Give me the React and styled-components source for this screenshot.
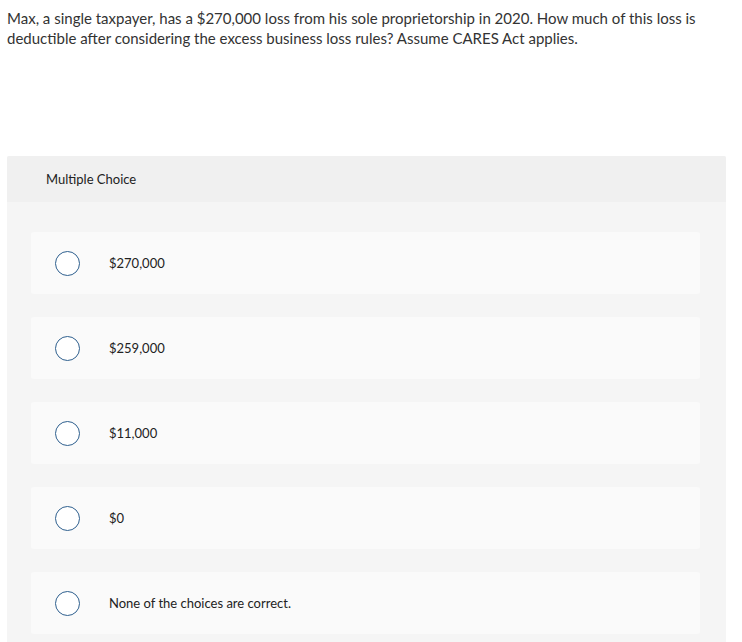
import React from 'react'
import styled, { createGlobalStyle } from 'styled-components'

const GlobalStyle = createGlobalStyle`
  body {
    margin: 0;
    background: #ffffff;
    font-family: Lato, "Open Sans", sans-serif;
    color: #333333;
  }
`

const choices = ['$270,000', '$259,000', '$11,000', '$0', 'None of the choices are correct.']

function App() {
    return (
        <Page>
            <GlobalStyle />
            <Question>
                Max, a single taxpayer, has a $270,000 loss from his sole proprietorship in 2020. How much of this loss is deductible after considering the excess business loss rules? Assume CARES Act applies.
            </Question>
            <Panel>
                <PanelHeader>Multiple Choice</PanelHeader>
                <Choices>
                    {choices.map((c) => (
                        <Choice key={c}>
                            <Radio />
                            <ChoiceText>{c}</ChoiceText>
                        </Choice>
                    ))}
                </Choices>
            </Panel>
        </Page>
    )
}

export default App

const Page = styled.div`
  padding: 8px 16px 0 7px;
`

const Question = styled.div`
  font-size: 15px;
  line-height: 20px;
  color: #333;
  min-height: 148px;
`

const Panel = styled.div`
  background: #f5f5f5;
  border-radius: 2px;
  overflow: hidden;
`

const PanelHeader = styled.div`
  background: #f0f0f0;
  height: 46px;
  display: flex;
  align-items: center;
  padding-left: 39px;
  font-size: 13px;
  color: #222;
`

const Choices = styled.div`
  display: flex;
  flex-direction: column;
  gap: 23px;
  padding: 30px 26px 10px 24px;
`

const Choice = styled.div`
  background: #fafafa;
  border-radius: 3px;
  height: 62px;
  display: flex;
  align-items: center;
  padding-left: 24px;
`

const Radio = styled.span`
  width: 23px;
  height: 23px;
  border: 1.5px solid #2e5f8e;
  border-radius: 50%;
  background: #fff;
  flex-shrink: 0;
`

const ChoiceText = styled.span`
  margin-left: 29px;
  font-size: 13px;
  color: #222;
`
